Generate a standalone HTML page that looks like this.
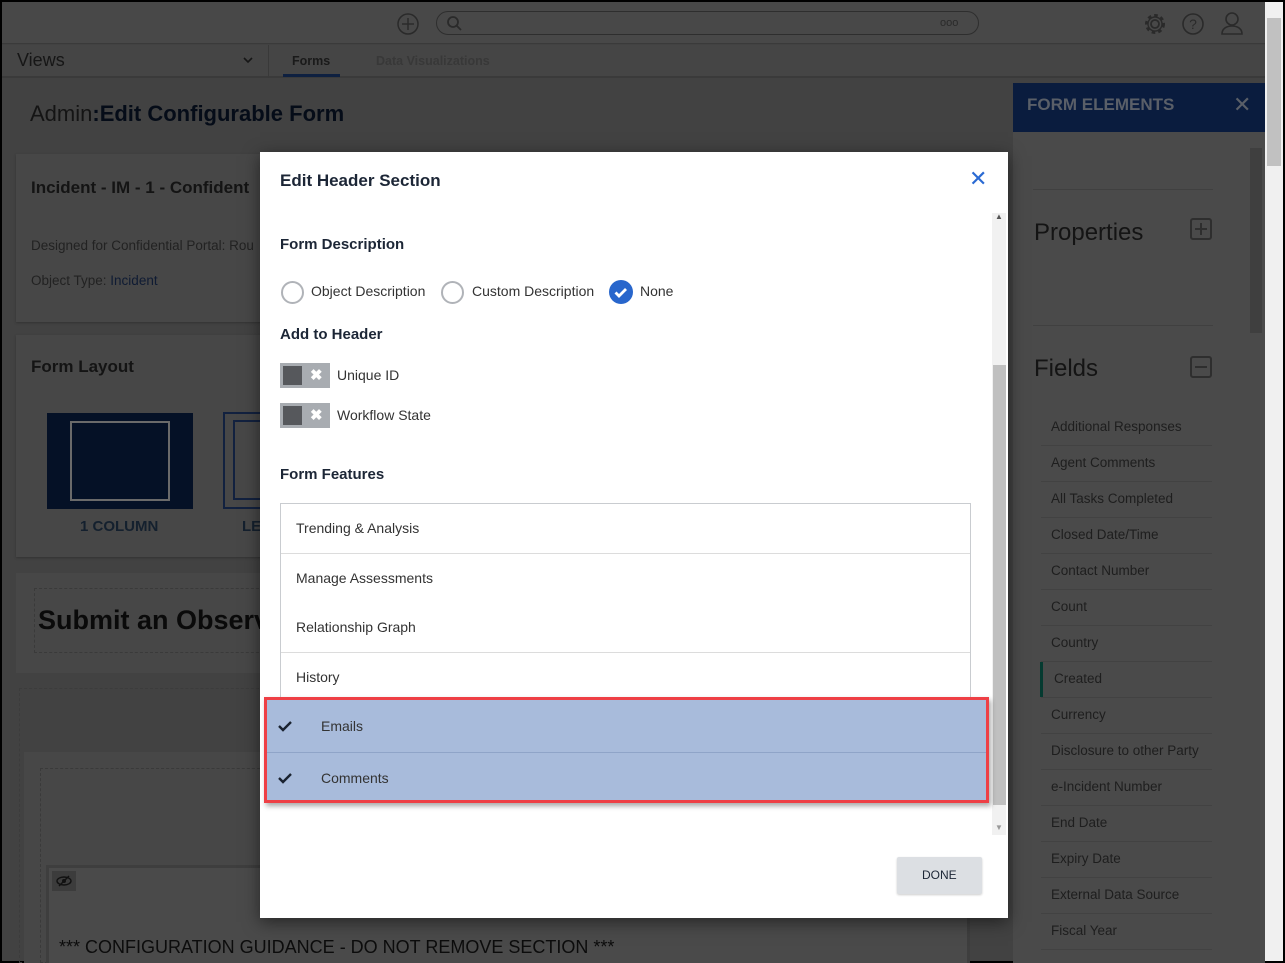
<!DOCTYPE html>
<html><head><style>
*{box-sizing:border-box;margin:0;padding:0}
body{width:1285px;height:963px;overflow:hidden;background:#000;font-family:"Liberation Sans",sans-serif;position:relative}
.a{position:absolute}
.t{position:absolute;white-space:nowrap}
</style></head><body>
<div class="a" style="left:2px;top:2px;width:1263px;height:959px;background:#424242"></div>
<!-- top bar -->
<div class="a" style="left:2px;top:2px;width:1263px;height:42px;background:#484848;border-bottom:1px solid #3a3a3a"></div>
<svg class="a" style="left:396px;top:12px" width="24" height="24"><circle cx="12" cy="12" r="10" fill="none" stroke="#2a2a2a" stroke-width="1.5"/><path d="M12 6v12M6 12h12" stroke="#2a2a2a" stroke-width="1.5"/></svg>
<div class="a" style="left:436px;top:11px;width:543px;height:24px;border:1.5px solid #2e2e2e;border-radius:12px"></div>
<svg class="a" style="left:446px;top:15px" width="16" height="16"><circle cx="7" cy="7" r="5" fill="none" stroke="#2a2a2a" stroke-width="1.8"/><path d="M11 11l4 4" stroke="#2a2a2a" stroke-width="1.8"/></svg>
<div class="t" style="left:940px;top:17px;font-size:11px;color:#2a2a2a">ooo</div>
<svg class="a" style="left:1142px;top:11px" width="26" height="26"><circle cx="13" cy="13" r="4" fill="none" stroke="#2a2a2a" stroke-width="1.8"/><circle cx="13" cy="13" r="8.5" fill="none" stroke="#2a2a2a" stroke-width="3" stroke-dasharray="3.5 3"/><circle cx="13" cy="13" r="7" fill="none" stroke="#2a2a2a" stroke-width="1.4"/></svg>
<svg class="a" style="left:1180px;top:11px" width="26" height="26"><circle cx="13" cy="13" r="10" fill="none" stroke="#2a2a2a" stroke-width="1.6"/><text x="13" y="18" text-anchor="middle" font-size="14" fill="#2a2a2a" font-family="Liberation Sans">?</text></svg>
<svg class="a" style="left:1219px;top:10px" width="26" height="26"><circle cx="13" cy="9" r="6" fill="none" stroke="#2a2a2a" stroke-width="1.6"/><path d="M3 24h20c0-5-4-8-10-8S3 19 3 24z" fill="none" stroke="#2a2a2a" stroke-width="1.6"/></svg>
<!-- views bar -->
<div class="a" style="left:2px;top:45px;width:1263px;height:33px;background:#454545;border-bottom:2px solid #3a3a3a"></div>
<div class="t" style="left:17px;top:50px;font-size:18px;color:#161616">Views</div>
<svg class="a" style="left:243px;top:57px" width="10" height="7"><path d="M1 1l4 4 4-4" fill="none" stroke="#161616" stroke-width="1.6"/></svg>
<div class="a" style="left:268px;top:45px;width:1px;height:33px;background:#393939"></div>
<div class="t" style="left:292px;top:54px;font-size:12.5px;font-weight:bold;color:#1a1a1a">Forms</div>
<div class="a" style="left:283px;top:74px;width:57px;height:3px;background:#0e2040"></div>
<div class="t" style="left:376px;top:54px;font-size:12.5px;font-weight:bold;color:#383838">Data Visualizations</div>
<!-- content -->
<div class="t" style="left:30px;top:101px;font-size:22px;color:#141414">Admin<b style="color:#050c18">:</b><span style="color:#050c18;font-weight:bold">Edit Configurable Form</span></div>
<div class="a" style="left:16px;top:154px;width:260px;height:168px;background:#474747;box-shadow:0 1px 2px #333"></div>
<div class="t" style="left:31px;top:178px;font-size:17px;font-weight:bold;color:#141414">Incident - IM - 1 - Confident</div>
<div class="t" style="left:31px;top:238px;font-size:13.5px;color:#222">Designed for Confidential Portal: Rou</div>
<div class="t" style="left:31px;top:273px;font-size:13.5px;color:#222">Object Type: <span style="color:#0f1b33">Incident</span></div>
<div class="a" style="left:16px;top:335px;width:260px;height:222px;background:#474747;box-shadow:0 1px 2px #333"></div>
<div class="t" style="left:31px;top:357px;font-size:17px;font-weight:bold;color:#141414">Form Layout</div>
<div class="a" style="left:47px;top:413px;width:146px;height:96px;background:#051126"></div>
<div class="a" style="left:70px;top:421px;width:100px;height:80px;border:2px solid #6a6a6a"></div>
<div class="t" style="left:80px;top:518px;font-size:15px;font-weight:bold;color:#14202e">1 COLUMN</div>
<div class="a" style="left:223px;top:412px;width:40px;height:97px;border:2px solid #12213f"></div>
<div class="a" style="left:233px;top:420px;width:30px;height:80px;border:2px solid #12213f;border-right:none"></div>
<div class="t" style="left:242px;top:518px;font-size:15px;font-weight:bold;color:#14202e">LE</div>
<div class="a" style="left:16px;top:573px;width:260px;height:100px;background:#474747"></div>
<div class="a" style="left:34px;top:588px;width:240px;height:65px;border:1px dashed #3a3a3a"></div>
<div class="t" style="left:38px;top:605px;font-size:27px;font-weight:bold;color:#0a0a0a">Submit an Observ</div>
<div class="a" style="left:19px;top:688px;width:250px;height:275px;border:1px dashed #3c3c3c"></div>
<div class="a" style="left:24px;top:752px;width:246px;height:211px;background:#474747"></div>
<div class="a" style="left:40px;top:768px;width:230px;height:195px;border:1px dashed #3a3a3a"></div>
<div class="a" style="left:46px;top:865px;width:924px;height:98px;border:3px solid #3e3e3e;border-bottom:none;background:#4a4a4a"></div>
<div class="a" style="left:52px;top:871px;width:24px;height:20px;background:#3c3c3c"></div>
<svg class="a" style="left:55px;top:874px" width="18" height="14"><ellipse cx="9" cy="7" rx="7" ry="4" fill="none" stroke="#111" stroke-width="1.4"/><circle cx="9" cy="7" r="2" fill="#111"/><path d="M4 12L14 2" stroke="#111" stroke-width="1.4"/></svg>
<div class="t" style="left:59px;top:937px;font-size:18px;color:#0c0c0c">*** CONFIGURATION GUIDANCE - DO NOT REMOVE SECTION ***</div>
<!-- right panel -->
<div class="a" style="left:1013px;top:83px;width:252px;height:880px;background:#4a4a4a"></div>
<div class="a" style="left:1013px;top:83px;width:252px;height:49px;background:#0a1c3e"></div>
<div class="t" style="left:1027px;top:95px;font-size:17px;font-weight:bold;color:#5a5f68">FORM ELEMENTS</div>
<div class="t" style="left:1233px;top:92px;font-size:22px;color:#5a5f68">✕</div>
<div class="a" style="left:1250px;top:148px;width:12px;height:185px;background:#3f3f3f"></div>
<div class="a" style="left:1033px;top:189px;width:180px;height:1px;background:#404040"></div>
<div class="t" style="left:1034px;top:219px;font-size:24px;color:#141414">Properties</div>
<div class="a" style="left:1190px;top:218px;width:22px;height:22px;border:2px solid #2e2e2e;border-radius:3px"></div>
<div class="a" style="left:1195px;top:228px;width:12px;height:2px;background:#2e2e2e"></div>
<div class="a" style="left:1200px;top:223px;width:2px;height:12px;background:#2e2e2e"></div>
<div class="a" style="left:1033px;top:325px;width:180px;height:1px;background:#404040"></div>
<div class="t" style="left:1034px;top:355px;font-size:24px;color:#141414">Fields</div>
<div class="a" style="left:1190px;top:356px;width:22px;height:22px;border:2px solid #2e2e2e;border-radius:3px"></div>
<div class="a" style="left:1195px;top:366px;width:12px;height:2px;background:#2e2e2e"></div>
<div id="fl"></div>
<!-- page scrollbar -->
<div class="a" style="left:1265px;top:2px;width:18px;height:959px;background:#f0f0f0"></div>
<div class="a" style="left:1267px;top:18px;width:14px;height:148px;background:#c1c1c1"></div>
<!-- modal -->
<div class="a" style="left:260px;top:152px;width:748px;height:766px;background:#fff;box-shadow:0 4px 16px rgba(0,0,0,.5)"></div>
<div class="t" style="left:280px;top:171px;font-size:17px;font-weight:bold;color:#1c2636">Edit Header Section</div>
<div class="t" style="left:969px;top:166px;font-size:22px;color:#2a6ad3">✕</div>
<div class="a" style="left:992px;top:213px;width:14px;height:622px;background:#f1f1f1"></div>
<div class="a" style="left:993px;top:365px;width:13px;height:440px;background:#c0c0c0"></div>
<div class="t" style="left:995px;top:212px;font-size:8px;color:#555">▲</div>
<div class="t" style="left:995px;top:823px;font-size:8px;color:#999">▼</div>
<div class="t" style="left:280px;top:236px;font-size:15px;font-weight:bold;color:#1c2636">Form Description</div>
<div class="a" style="left:281px;top:281px;width:23px;height:23px;border:2px solid #b0b3b8;border-radius:50%"></div>
<div class="t" style="left:311px;top:283px;font-size:14px;color:#333">Object Description</div>
<div class="a" style="left:441px;top:281px;width:23px;height:23px;border:2px solid #b0b3b8;border-radius:50%"></div>
<div class="t" style="left:472px;top:283px;font-size:14px;color:#333">Custom Description</div>
<svg class="a" style="left:609px;top:280px" width="24" height="24"><circle cx="12" cy="12" r="12" fill="#2866cc"/><path d="M6.5 12.5l3.5 3.5 7-7" fill="none" stroke="#fff" stroke-width="2.8"/></svg>
<div class="t" style="left:640px;top:283px;font-size:14px;color:#333">None</div>
<div class="t" style="left:280px;top:326px;font-size:15px;font-weight:bold;color:#1c2636">Add to Header</div>
<div class="a" style="left:280px;top:363px;width:50px;height:25px;background:#a8acb1"></div>
<div class="a" style="left:283px;top:366px;width:19px;height:19px;background:#56585c"></div>
<div class="t" style="left:310px;top:366px;font-size:15px;font-weight:bold;color:#fff">✖</div>
<div class="t" style="left:337px;top:367px;font-size:14px;color:#333">Unique ID</div>
<div class="a" style="left:280px;top:403px;width:50px;height:25px;background:#a8acb1"></div>
<div class="a" style="left:283px;top:406px;width:19px;height:19px;background:#56585c"></div>
<div class="t" style="left:310px;top:406px;font-size:15px;font-weight:bold;color:#fff">✖</div>
<div class="t" style="left:337px;top:407px;font-size:14px;color:#333">Workflow State</div>
<div class="t" style="left:280px;top:466px;font-size:15px;font-weight:bold;color:#1c2636">Form Features</div>
<div class="a" style="left:280px;top:503px;width:691px;height:200px;border:1px solid #c9ccd0;border-bottom:none"></div>
<div class="a" style="left:281px;top:553px;width:689px;height:1px;background:#dcdcdc"></div>
<div class="a" style="left:281px;top:652px;width:689px;height:1px;background:#dcdcdc"></div>
<div class="t" style="left:296px;top:520px;font-size:14px;color:#333">Trending &amp; Analysis</div>
<div class="t" style="left:296px;top:570px;font-size:14px;color:#333">Manage Assessments</div>
<div class="t" style="left:296px;top:619px;font-size:14px;color:#333">Relationship Graph</div>
<div class="t" style="left:296px;top:669px;font-size:14px;color:#333">History</div>
<div class="a" style="left:264px;top:697px;width:725px;height:106px;background:#a8bbdb;border:3px solid #ee3f45;box-shadow:2px 3px 5px rgba(0,0,0,.35)"></div>
<div class="a" style="left:267px;top:752px;width:719px;height:1px;background:#8fa4c8"></div>
<svg class="a" style="left:278px;top:720px" width="14" height="12"><path d="M1 6l4 4 8-8" fill="none" stroke="#1a2230" stroke-width="2.4"/></svg>
<div class="t" style="left:321px;top:718px;font-size:14px;color:#333">Emails</div>
<svg class="a" style="left:278px;top:772px" width="14" height="12"><path d="M1 6l4 4 8-8" fill="none" stroke="#1a2230" stroke-width="2.4"/></svg>
<div class="t" style="left:321px;top:770px;font-size:14px;color:#333">Comments</div>
<div class="a" style="left:897px;top:857px;width:85px;height:37px;background:#dcdfe3;border-radius:2px;box-shadow:0 1px 2px rgba(0,0,0,.2)"></div>
<div class="t" style="left:922px;top:868px;font-size:12px;color:#1c2636">DONE</div>
<script>
var f=["Additional Responses","Agent Comments","All Tasks Completed","Closed Date/Time","Contact Number","Count","Country","Created","Currency","Disclosure to other Party","e-Incident Number","End Date","Expiry Date","External Data Source","Fiscal Year"];
var h="";f.forEach(function(s,i){var y=409+i*36;h+='<div class="t" style="left:'+(s=="Created"?1054:1051)+'px;top:'+(y+10)+'px;font-size:13.5px;color:#1e1e1e">'+s+'</div><div class="a" style="left:1041px;top:'+(y+36)+'px;width:171px;height:1px;background:#424242"></div>';if(s=="Created")h+='<div class="a" style="left:1040px;top:'+(y+1)+'px;width:3px;height:35px;background:#053a30"></div>';});
document.getElementById("fl").outerHTML=h;
</script>
</body></html>
